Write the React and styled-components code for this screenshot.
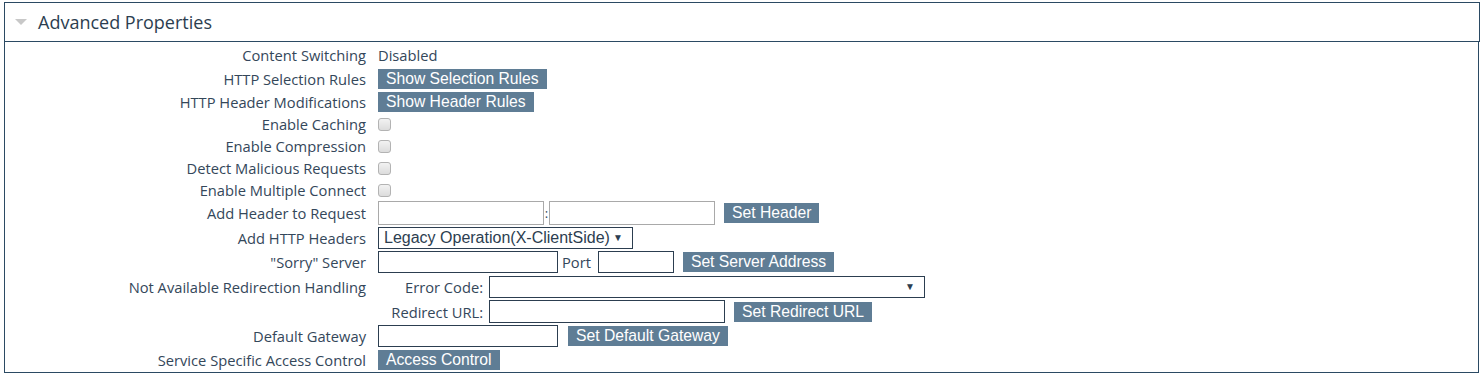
import React from "react";
import styled, { createGlobalStyle } from "styled-components";

const GlobalStyle = createGlobalStyle`
  body {
    margin: 0;
    background: #fff;
    font-family: "Open Sans", "Noto Sans", sans-serif;
    color: #34475a;
  }
`;

const Page = styled.div`
  padding: 2px 4px 0 4px;
`;

const Header = styled.header`
  height: 38px;
  display: flex;
  align-items: center;
  padding-left: 10px;
  border: 1px solid #2b4a63;
  font-size: 18px;
  color: #2c3e50;
`;
const Caret = styled.span`
  width: 0;
  height: 0;
  margin-right: 11px;
  border-left: 6px solid transparent;
  border-right: 6px solid transparent;
  border-top: 6px solid #c8c8c8;
`;

const Body = styled.section`
  margin-right: 1px;
  padding-top: 1px;
  border: 1px solid #2b4a63;
  border-top: none;
`;

const Row = styled.div`
  height: ${(p) => p.$h}px;
  display: grid;
  grid-template-columns: 361px 1fr;
  column-gap: 12px;
  align-items: ${(p) => (p.$top ? "start" : "center")};
`;

const Label = styled.div`
  text-align: right;
  font-size: 14.7px;
  white-space: nowrap;
  padding-top: ${(p) => (p.$top ? "3px" : "0")};
`;

const Value = styled.div`
  display: flex;
  align-items: center;
  font-size: 14.7px;
`;

const Button = styled.button`
  height: 20px;
  padding: 0 8px;
  border: none;
  margin-left: ${(p) => p.$ml || 0}px;
  background: #5f7d95;
  color: #fff;
  font-family: "Liberation Sans", Arial, sans-serif;
  font-size: 15.7px;
  line-height: 20px;
  white-space: nowrap;
`;

const Check = styled.span`
  width: 11px;
  height: 11px;
  border: 1px solid #b3b3b3;
  border-radius: 3px;
  background: linear-gradient(#f2f2f2, #dcdcdc);
`;

const Input = styled.input`
  box-sizing: border-box;
  width: ${(p) => p.$w}px;
  height: ${(p) => p.$h || 22}px;
  padding: 0 3px;
  border: 1px solid ${(p) => (p.$light ? "#a9a9a9" : "#2c3e50")};
  background: #fff;
  outline: none;
`;

const Select = styled.div`
  box-sizing: border-box;
  width: ${(p) => p.$w}px;
  height: 22px;
  display: flex;
  align-items: center;
  justify-content: space-between;
  padding: 0 9px 0 5px;
  border: 1px solid #2c3e50;
  font-family: "Liberation Sans", Arial, sans-serif;
  font-size: 16px;
  color: #2c3e50;
`;
const Arrow = styled.span`
  font-size: 10px;
  color: #2c3e50;
`;

const Colon = styled.span`
  width: 5px;
  font-size: 13px;
  text-align: center;
`;

const Inline = styled.span`
  margin: 0 7px 0 4px;
`;

const Nested = styled.div`
  display: grid;
  grid-template-columns: 105px auto;
  grid-auto-rows: 25px;
  column-gap: 6px;
  align-items: center;
  justify-items: start;
`;
const SubLabel = styled.div`
  justify-self: end;
  font-size: 14.7px;
  white-space: nowrap;
`;
const SubValue = styled.div`
  display: flex;
  align-items: center;
`;

const checks = [
  "Enable Caching",
  "Enable Compression",
  "Detect Malicious Requests",
  "Enable Multiple Connect",
];

export default function App() {
  return (
    <Page>
      <GlobalStyle />
      <Header>
        <Caret />
        Advanced Properties
      </Header>
      <Body>
        <Row $h={24}>
          <Label>Content Switching</Label>
          <Value>Disabled</Value>
        </Row>
        <Row $h={24}>
          <Label>HTTP Selection Rules</Label>
          <Value>
            <Button>Show Selection Rules</Button>
          </Value>
        </Row>
        <Row $h={22}>
          <Label>HTTP Header Modifications</Label>
          <Value>
            <Button>Show Header Rules</Button>
          </Value>
        </Row>
        {checks.map((c) => (
          <Row $h={22} key={c}>
            <Label>{c}</Label>
            <Value>
              <Check />
            </Value>
          </Row>
        ))}
        <Row $h={24}>
          <Label>Add Header to Request</Label>
          <Value>
            <Input $w={166} $h={24} $light />
            <Colon>:</Colon>
            <Input $w={166} $h={24} $light />
            <Button $ml={9}>Set Header</Button>
          </Value>
        </Row>
        <Row $h={25}>
          <Label>Add HTTP Headers</Label>
          <Value>
            <Select $w={255}>
              Legacy Operation(X-ClientSide)
              <Arrow>▼</Arrow>
            </Select>
          </Value>
        </Row>
        <Row $h={24}>
          <Label>"Sorry" Server</Label>
          <Value>
            <Input $w={180} />
            <Inline>Port</Inline>
            <Input $w={76} />
            <Button $ml={9}>Set Server Address</Button>
          </Value>
        </Row>
        <Row $h={50} $top>
          <Label $top>Not Available Redirection Handling</Label>
          <Nested>
            <SubLabel>Error Code:</SubLabel>
            <SubValue>
              <Select $w={436}>
                <span />
                <Arrow>▼</Arrow>
              </Select>
            </SubValue>
            <SubLabel>Redirect URL:</SubLabel>
            <SubValue>
              <Input $w={236} $h={23} />
              <Button $ml={9}>Set Redirect URL</Button>
            </SubValue>
          </Nested>
        </Row>
        <Row $h={24}>
          <Label>Default Gateway</Label>
          <Value>
            <Input $w={180} />
            <Button $ml={10}>Set Default Gateway</Button>
          </Value>
        </Row>
        <Row $h={24}>
          <Label>Service Specific Access Control</Label>
          <Value>
            <Button>Access Control</Button>
          </Value>
        </Row>
      </Body>
    </Page>
  );
}
